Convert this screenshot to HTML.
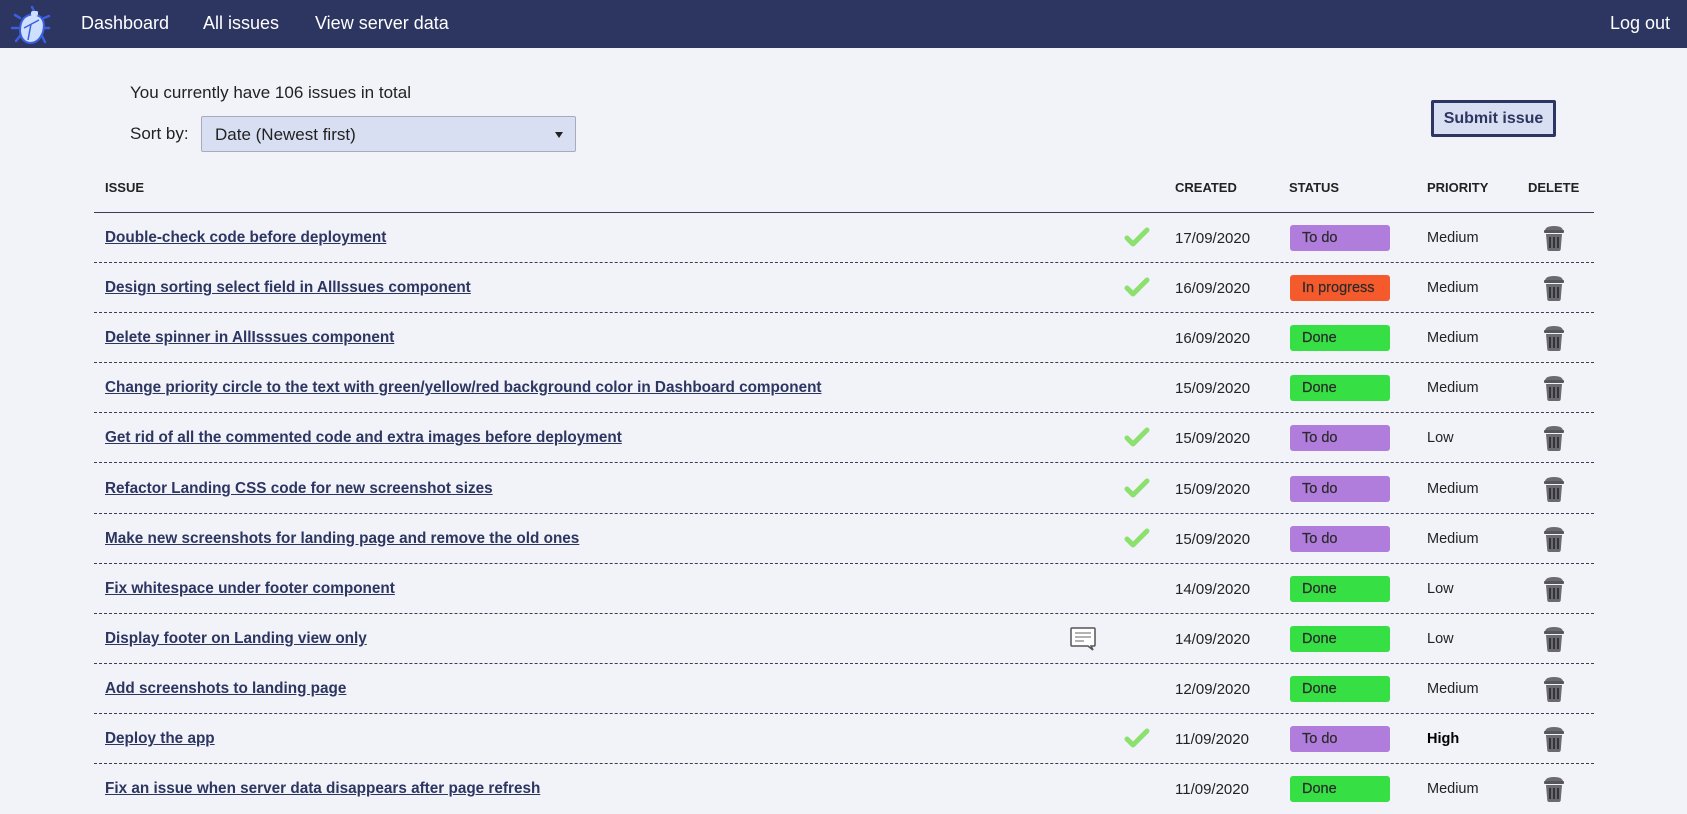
<!DOCTYPE html>
<html><head><meta charset="utf-8"><style>
*{margin:0;padding:0;box-sizing:border-box}
body{width:1687px;height:811px;overflow:hidden;background:#f1f3f8;font-family:"Liberation Sans",Arial,sans-serif;color:#222;position:relative}
.nav{position:absolute;left:0;top:0;width:1687px;height:48px;background:#2d3561}
.nav a{position:absolute;top:13px;color:#fff;font-size:18px;text-decoration:none}
.t{position:absolute;white-space:nowrap}
.sel{position:absolute;left:201px;top:116px;width:375px;height:36px;background:#d9dff2;border:1px solid #aab;border-radius:2px;font-size:17px;padding:8px 0 0 13px}
.sel:after{content:"";position:absolute;right:12px;top:15px;border-left:4px solid transparent;border-right:4px solid transparent;border-top:6px solid #222}
.btn{position:absolute;left:1431px;top:100px;width:125px;height:37px;background:#d9dff2;border:3px solid #2d3561;border-radius:2px;font-size:16px;font-weight:bold;color:#2d3561;text-align:center;line-height:31px}
.hd{position:absolute;top:180px;font-size:13px;font-weight:bold;color:#222}
.hline{position:absolute;left:94px;width:1500px;top:212px;height:1px;background:#3a3d55}
.row{position:absolute;left:94px;width:1500px;height:50px}
.row .sep{position:absolute;left:0;right:0;bottom:0;border-bottom:1px dashed #3a3d55}
.iss{position:absolute;left:11px;top:16px;font-size:15.3px;color:#2d3561;text-decoration:underline;font-weight:bold}
.dt{position:absolute;left:1081px;top:17px;font-size:15px;color:#222}
.bd{position:absolute;left:1196px;top:12px;width:100px;height:26px;border-radius:3px;font-size:14.5px;padding:5px 0 0 12px;color:#2a2a2a;-webkit-text-stroke:0.2px #2a2a2a}
.pr{position:absolute;left:1333px;top:17px;font-size:14.5px;color:#222}
.tr{position:absolute;left:1449px;top:11px}
.ck{position:absolute;left:1030px;top:14px}
.cm{position:absolute;left:975px;top:12px}
</style></head><body>
<div class="nav">
<svg style="position:absolute;left:10px;top:4px" width="42" height="42" viewBox="0 0 42 42">
<g stroke="#3b5fe0" stroke-width="2.5" fill="none" stroke-linecap="round">
<path d="M22 3l3 6M10 14l-5-3M8 24H2M10 32l-4 5M34 14l5-2M34 24h5M32 32l3 6M25 9l2-1"/></g>
<path d="M14 14 Q21 8 29 12 Q36 16 33 28 Q29 39 20 39 Q11 38 10 27 Q10 18 14 14Z" fill="#cfe0ff" stroke="#3b5fe0" stroke-width="2"/>
<rect x="21" y="7" width="7" height="5" rx="2" fill="#cfe0ff"/>
<path d="M14 24 L29 16 M21 20 L18 36" stroke="#3b5fe0" stroke-width="1.5"/>
</svg>
<a style="left:81px">Dashboard</a>
<a style="left:203px">All issues</a>
<a style="left:315px">View server data</a>
<a style="left:1610px">Log out</a>
</div>
<div class="t" style="left:130px;top:83px;font-size:17px">You currently have 106 issues in total</div>
<div class="t" style="left:130px;top:124px;font-size:17px">Sort by:</div>
<div class="sel">Date (Newest first)</div>
<div class="btn">Submit issue</div>
<div class="hd" style="left:105px">ISSUE</div>
<div class="hd" style="left:1175px">CREATED</div>
<div class="hd" style="left:1289px">STATUS</div>
<div class="hd" style="left:1427px">PRIORITY</div>
<div class="hd" style="left:1528px">DELETE</div>
<div class="hline"></div>
<div id="rows"></div>
<script>
var R=[["Double-check code before deployment",1,"17/09/2020","t","Medium"],
["Design sorting select field in AllIssues component",1,"16/09/2020","p","Medium"],
["Delete spinner in AllIsssues component",0,"16/09/2020","d","Medium"],
["Change priority circle to the text with green/yellow/red background color in Dashboard component",0,"15/09/2020","d","Medium"],
["Get rid of all the commented code and extra images before deployment",1,"15/09/2020","t","Low"],
["Refactor Landing CSS code for new screenshot sizes",1,"15/09/2020","t","Medium"],
["Make new screenshots for landing page and remove the old ones",1,"15/09/2020","t","Medium"],
["Fix whitespace under footer component",0,"14/09/2020","d","Low"],
["Display footer on Landing view only",2,"14/09/2020","d","Low"],
["Add screenshots to landing page",0,"12/09/2020","d","Medium"],
["Deploy the app",1,"11/09/2020","t","High"],
["Fix an issue when server data disappears after page refresh",0,"11/09/2020","d","Medium"]];
var S={t:["To do","#b07ddc"],p:["In progress","#f55a2c"],d:["Done","#36e044"]};
var ck='<svg class="ck" width="26" height="20" viewBox="0 0 26 20"><path d="M3 11l6 6L23 3" stroke="#8be06e" stroke-width="5" fill="none" stroke-linecap="round" stroke-linejoin="round"/></svg>';
var cm='<svg class="cm" width="28" height="26" viewBox="0 0 28 26"><path d="M3 2h22a1 1 0 0 1 1 1v16a1 1 0 0 1-1 1h-3l2 4-5-4H3a1 1 0 0 1-1-1V3a1 1 0 0 1 1-1z" fill="#fff" stroke="#555" stroke-width="1.5"/><path d="M6 7h16M6 11h16M6 15h9" stroke="#999" stroke-width="1.5"/></svg>';
var tr='<svg class="tr" width="22" height="28" viewBox="0 0 22 28"><path d="M2 7 Q2 2 11 2 Q20 2 20 7 Z" fill="#6a6a70"/><rect x="1" y="6" width="20" height="3" rx="1" fill="#55555b"/><path d="M3 10h16l-1.3 15.5a2 2 0 0 1-2 1.5h-9.4a2 2 0 0 1-2-1.5z" fill="#6a6a70"/><path d="M7 13v11M11 13v11M15 13v11" stroke="#2e2e33" stroke-width="1.8"/></svg>';
var h="";
R.forEach(function(r,i){var s=S[r[3]];
h+='<div class="row" style="top:'+(213+i*50.1)+'px"><div class="iss">'+r[0]+'</div>'+(r[1]==1?ck:r[1]==2?cm:'')+'<div class="dt">'+r[2]+'</div><div class="bd" style="background:'+s[1]+'">'+s[0]+'</div><div class="pr"'+(r[4]=="High"?' style="font-weight:bold;color:#000"':'')+'>'+r[4]+'</div>'+tr+(i<11?'<div class="sep"></div>':'')+'</div>';});
document.getElementById("rows").innerHTML=h;
</script>
</body></html>
